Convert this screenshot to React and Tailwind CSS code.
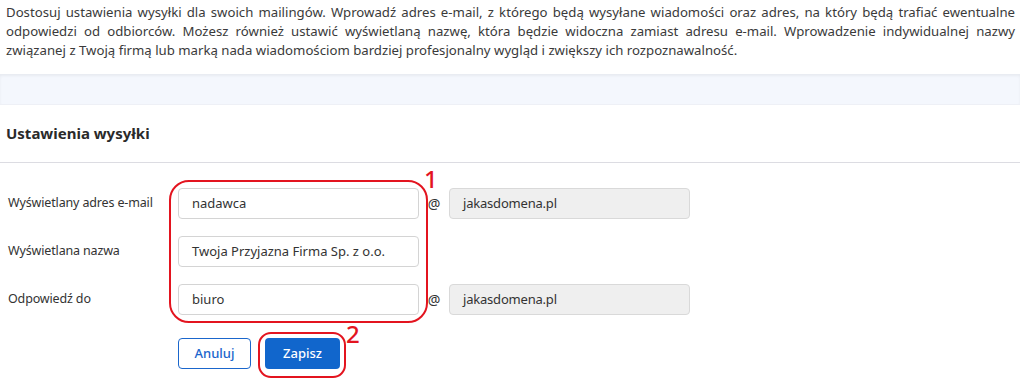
import React from "react";

const font = { fontFamily: '"Noto Sans", "Open Sans", sans-serif' };

function Input({ value, muted }) {
  return (
    <div
      className={
        "h-[31px] w-[241px] rounded-[4px] border flex items-center pl-[13px] text-[13px] text-[#333] " +
        (muted ? "bg-[#efefef] border-[#d9d9d9] tracking-[-0.2px]" : "bg-white border-[#d4d4d4]")
      }
    >
      {value}
    </div>
  );
}

function Row({ label, value, domain }) {
  return (
    <div className="flex items-center h-[31px]">
      <div className="w-[178px] pl-[8px] text-[12.5px] tracking-[-0.15px] text-[#333]">{label}</div>
      <Input value={value} />
      {domain && (
        <>
          <div className="w-[30px] text-center text-[14px] leading-none text-[#333]">@</div>
          <Input value={domain} muted />
        </>
      )}
    </div>
  );
}

export default function App() {
  return (
    <div className="relative w-[1020px] h-[383px] bg-white overflow-hidden" style={font}>
      <div className="pl-[6px] pr-[5px] pt-[3px] text-[13.2px] leading-[19px] text-[#3a3a3a] h-[74px]">
        <div className="text-justify [text-align-last:justify] whitespace-nowrap">
          Dostosuj ustawienia wysyłki dla swoich mailingów. Wprowadź adres e-mail, z którego będą wysyłane wiadomości oraz adres, na który będą trafiać ewentualne
        </div>
        <div className="text-justify [text-align-last:justify] whitespace-nowrap">
          odpowiedzi od odbiorców. Możesz również ustawić wyświetlaną nazwę, która będzie widoczna zamiast adresu e-mail. Wprowadzenie indywidualnej nazwy
        </div>
        <div className="whitespace-nowrap">
          związanej z Twoją firmą lub marką nada wiadomościom bardziej profesjonalny wygląd i zwiększy ich rozpoznawalność.
        </div>
      </div>
      <div className="h-[31px] bg-[#f4f7fd] shadow-[inset_0_2px_3px_rgba(0,0,0,0.05)] border-b border-[#eef0f6]" />
      <div className="h-[57px] flex items-center pl-[6px] text-[15px] font-bold text-[#2a2a2a]">
        Ustawienia wysyłki
      </div>
      <div className="h-px bg-[#dcdce2]" />
      <div className="pt-[25px] flex flex-col gap-[17px]">
        <Row label="Wyświetlany adres e-mail" value="nadawca" domain="jakasdomena.pl" />
        <Row label="Wyświetlana nazwa" value="Twoja Przyjazna Firma Sp. z o.o." />
        <Row label="Odpowiedź do" value="biuro" domain="jakasdomena.pl" />
      </div>
      <div className="flex gap-[14px] pl-[178px] pt-[23px]">
        <button className="h-[31px] w-[73px] rounded-[4px] border border-[#1a66cc] text-[#1a66cc] text-[13px] font-medium bg-white">
          Anuluj
        </button>
        <button className="h-[31px] w-[75px] rounded-[4px] bg-[#1166cc] text-white text-[13px] font-medium">
          Zapisz
        </button>
      </div>

      {/* annotations */}
      <div className="absolute left-[169px] top-[180px] w-[259px] h-[143px] rounded-[20px] border-2 border-[#e3141f] pointer-events-none" />
      <div className="absolute left-[424px] top-[168px] h-[22px] text-[24px] font-medium leading-[22px] text-[#e3141f]" style={font}>1</div>
      <div className="absolute left-[258px] top-[332px] w-[88px] h-[46px] rounded-[13px] border-2 border-[#e3141f] pointer-events-none" />
      <div className="absolute left-[346px] top-[323px] h-[22px] text-[24px] font-medium leading-[22px] text-[#e3141f]" style={font}>2</div>
    </div>
  );
}
